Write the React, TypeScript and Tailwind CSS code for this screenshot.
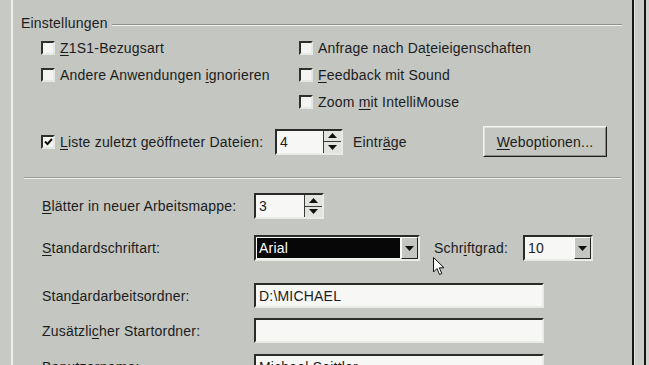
import type { ReactNode } from "react";

const txt = "font-['Liberation_Sans',Arial,sans-serif] text-[14px] tracking-[0.2px] text-[#1c1c1c] leading-none";

const U = ({ children }: { children: ReactNode }) => <span className="underline underline-offset-2">{children}</span>;

const Check = ({ checked = false }: { checked?: boolean }) => (
  <div className="w-[14px] h-[14px] shrink-0 bg-[#f4f5f3] border-2 border-t-[#2e302d] border-l-[#2e302d] border-b-[#e6e8e4] border-r-[#e6e8e4] flex items-center justify-center">
    {checked && (
      <svg width="9" height="8" viewBox="0 0 9 8">
        <path d="M1 3.5 L3.5 6 L8 1" stroke="#111" strokeWidth="2" fill="none" />
      </svg>
    )}
  </div>
);

// sunken white field (textbox look)
const Field = ({ w, h = 25, children }: { w: number; h?: number; children?: ReactNode }) => (
  <div
    className="shrink-0 bg-[#f7f8f6] border-2 border-t-[#2a2c29] border-l-[#2a2c29] border-b-[#e9ebe7] border-r-[#e9ebe7] flex items-stretch"
    style={{ width: w, height: h }}
  >
    {children}
  </div>
);

const Spin = ({ w, h, value }: { w: number; h: number; value: string }) => (
  <Field w={w} h={h}>
    <div className={`${txt} flex-1 flex items-center pl-[3px]`}>{value}</div>
    <div className="w-[18px] flex flex-col border-l border-[#3a3c39] bg-[#e2e4e0]">
      <div className="flex-1 flex items-center justify-center border-b border-[#3a3c39]">
        <svg width="9" height="5" viewBox="0 0 9 5"><path d="M0 5 L4.5 0 L9 5 Z" fill="#111" /></svg>
      </div>
      <div className="flex-1 flex items-center justify-center">
        <svg width="9" height="5" viewBox="0 0 9 5"><path d="M0 0 L4.5 5 L9 0 Z" fill="#111" /></svg>
      </div>
    </div>
  </Field>
);

const DropBtn = () => (
  <div className="w-[17px] bg-[#c3c6c1] border border-t-white border-l-white border-b-[#222] border-r-[#222] flex items-center justify-center">
    <svg width="9" height="5" viewBox="0 0 9 5"><path d="M0 0 L4.5 5 L9 0 Z" fill="#111" /></svg>
  </div>
);

export default function App() {
  return (
    <div className="w-[649px] h-[365px] overflow-hidden bg-[#c3c6c1] flex">
      <div className="w-[11px] bg-[#c6c9c4]" />
      <div className="w-[2px] bg-[#eef0ec]" />

      <div className="w-[619px] relative flex flex-col">
        <div className="h-px bg-[#a9aca7]" />
        {/* group header */}
        <div className="mt-[16px] h-[16px] pl-[8px] pr-[10px] flex items-center">
          <span className={txt}>Einstellungen</span>
          <div className="flex-1 ml-[4px] mt-[3px] h-[2px] border-t border-[#8d908b] border-b border-b-[#f2f3f0]" />
        </div>

        {/* checkboxes */}
        <div className="mt-[4px] pl-[28px] grid grid-cols-[258px_1fr] auto-rows-[27px]">
          <div className="flex items-center gap-[5px]">
            <Check />
            <span className={txt}><U>Z</U>1S1-Bezugsart</span>
          </div>
          <div className="flex items-center gap-[5px]">
            <Check />
            <span className={txt}>Anfrage nach Da<U>t</U>eieigenschaften</span>
          </div>
          <div className="flex items-center gap-[5px]">
            <Check />
            <span className={txt}>Andere Anwendungen <U>i</U>gnorieren</span>
          </div>
          <div className="flex items-center gap-[5px]">
            <Check />
            <span className={txt}><U>F</U>eedback mit Sound</span>
          </div>
          <div />
          <div className="flex items-center gap-[5px]">
            <Check />
            <span className={txt}>Zoom <U>m</U>it IntelliMouse</span>
          </div>
        </div>

        {/* recent files row */}
        <div className="mt-[11px] h-[31px] pl-[28px] flex items-center">
          <div className="w-[234px] flex items-center gap-[5px]">
            <Check checked />
            <span className={txt}><U>L</U>iste zuletzt geöffneter Dateien:</span>
          </div>
          <Spin w={68} h={26} value="4" />
          <span className={`${txt} ml-[10px] w-[130px]`}>Eintr<U>ä</U>ge</span>
          <div className="w-[124px] h-[31px] bg-[#c3c6c1] border border-t-[#f4f5f2] border-l-[#f4f5f2] border-b-[#1e1f1d] border-r-[#1e1f1d]">
            <div className="w-full h-full border border-t-[#dfe1dc] border-l-[#dfe1dc] border-b-[#888b86] border-r-[#888b86] flex items-center justify-center">
              <span className={txt}><U>W</U>eboptionen...</span>
            </div>
          </div>
        </div>

        {/* separator */}
        <div className="mt-[20px] mx-[11px] h-[2px] border-t border-[#9c9f9a] border-b border-b-[#eef0ec]" />

        {/* lower form */}
        <div className="pl-[29px] flex flex-col">
          <div className="mt-[14px] flex items-center">
            <span className={`${txt} w-[212px]`}><U>B</U>lätter in neuer Arbeitsmappe:</span>
            <Spin w={70} h={26} value="3" />
          </div>

          <div className="mt-[16px] flex items-center">
            <span className={`${txt} w-[212px]`}><U>S</U>tandardschriftart:</span>
            <Field w={166} h={26}>
              <div className="flex-1 flex items-center p-[1px]">
                <div className="w-full h-full bg-[#070707] flex items-center pl-[2px]">
                  <span className="font-['Liberation_Sans',Arial,sans-serif] text-[14px] tracking-[0.2px] leading-none text-white">Arial</span>
                </div>
              </div>
              <DropBtn />
            </Field>
            <span className={`${txt} ml-[14px] w-[89px]`}>Schr<U>i</U>ftgrad:</span>
            <Field w={70} h={26}>
              <div className={`${txt} flex-1 flex items-center pl-[3px]`}>10</div>
              <DropBtn />
            </Field>
          </div>

          <div className="mt-[22px] flex items-center">
            <span className={`${txt} w-[212px]`}>Stan<U>d</U>ardarbeitsordner:</span>
            <Field w={290}>
              <div className={`${txt} flex items-center pl-[3px]`}>D:\MICHAEL</div>
            </Field>
          </div>

          <div className="mt-[10px] flex items-center">
            <span className={`${txt} w-[212px]`}>Zusätzli<U>c</U>her Startordner:</span>
            <Field w={290} />
          </div>

          <div className="mt-[11px] flex items-center">
            <span className={`${txt} w-[212px]`}>B<U>e</U>nutzername:</span>
            <Field w={290}>
              <div className={`${txt} flex items-center pl-[3px]`}>Michael Seittler</div>
            </Field>
          </div>
        </div>

        {/* mouse pointer */}
        <svg className="absolute left-[420px] top-[257px]" width="13" height="20" viewBox="0 0 13 20">
          <path d="M0.5 0.5 L0.5 15 L4 11.5 L6.5 17.5 L8.8 16.5 L6.3 10.8 L11 10.8 Z" fill="#fff" stroke="#111" strokeWidth="1" />
        </svg>
      </div>

      <div className="w-[2px] bg-[#161815]" />
      <div className="w-[10px] bg-[#c9ccc7] flex">
        <div className="w-px bg-[#e4e6e2]" />
      </div>
      <div className="w-[2px] bg-[#161815]" />
      <div className="w-[3px] bg-[#cfd2cd]" />
    </div>
  );
}
